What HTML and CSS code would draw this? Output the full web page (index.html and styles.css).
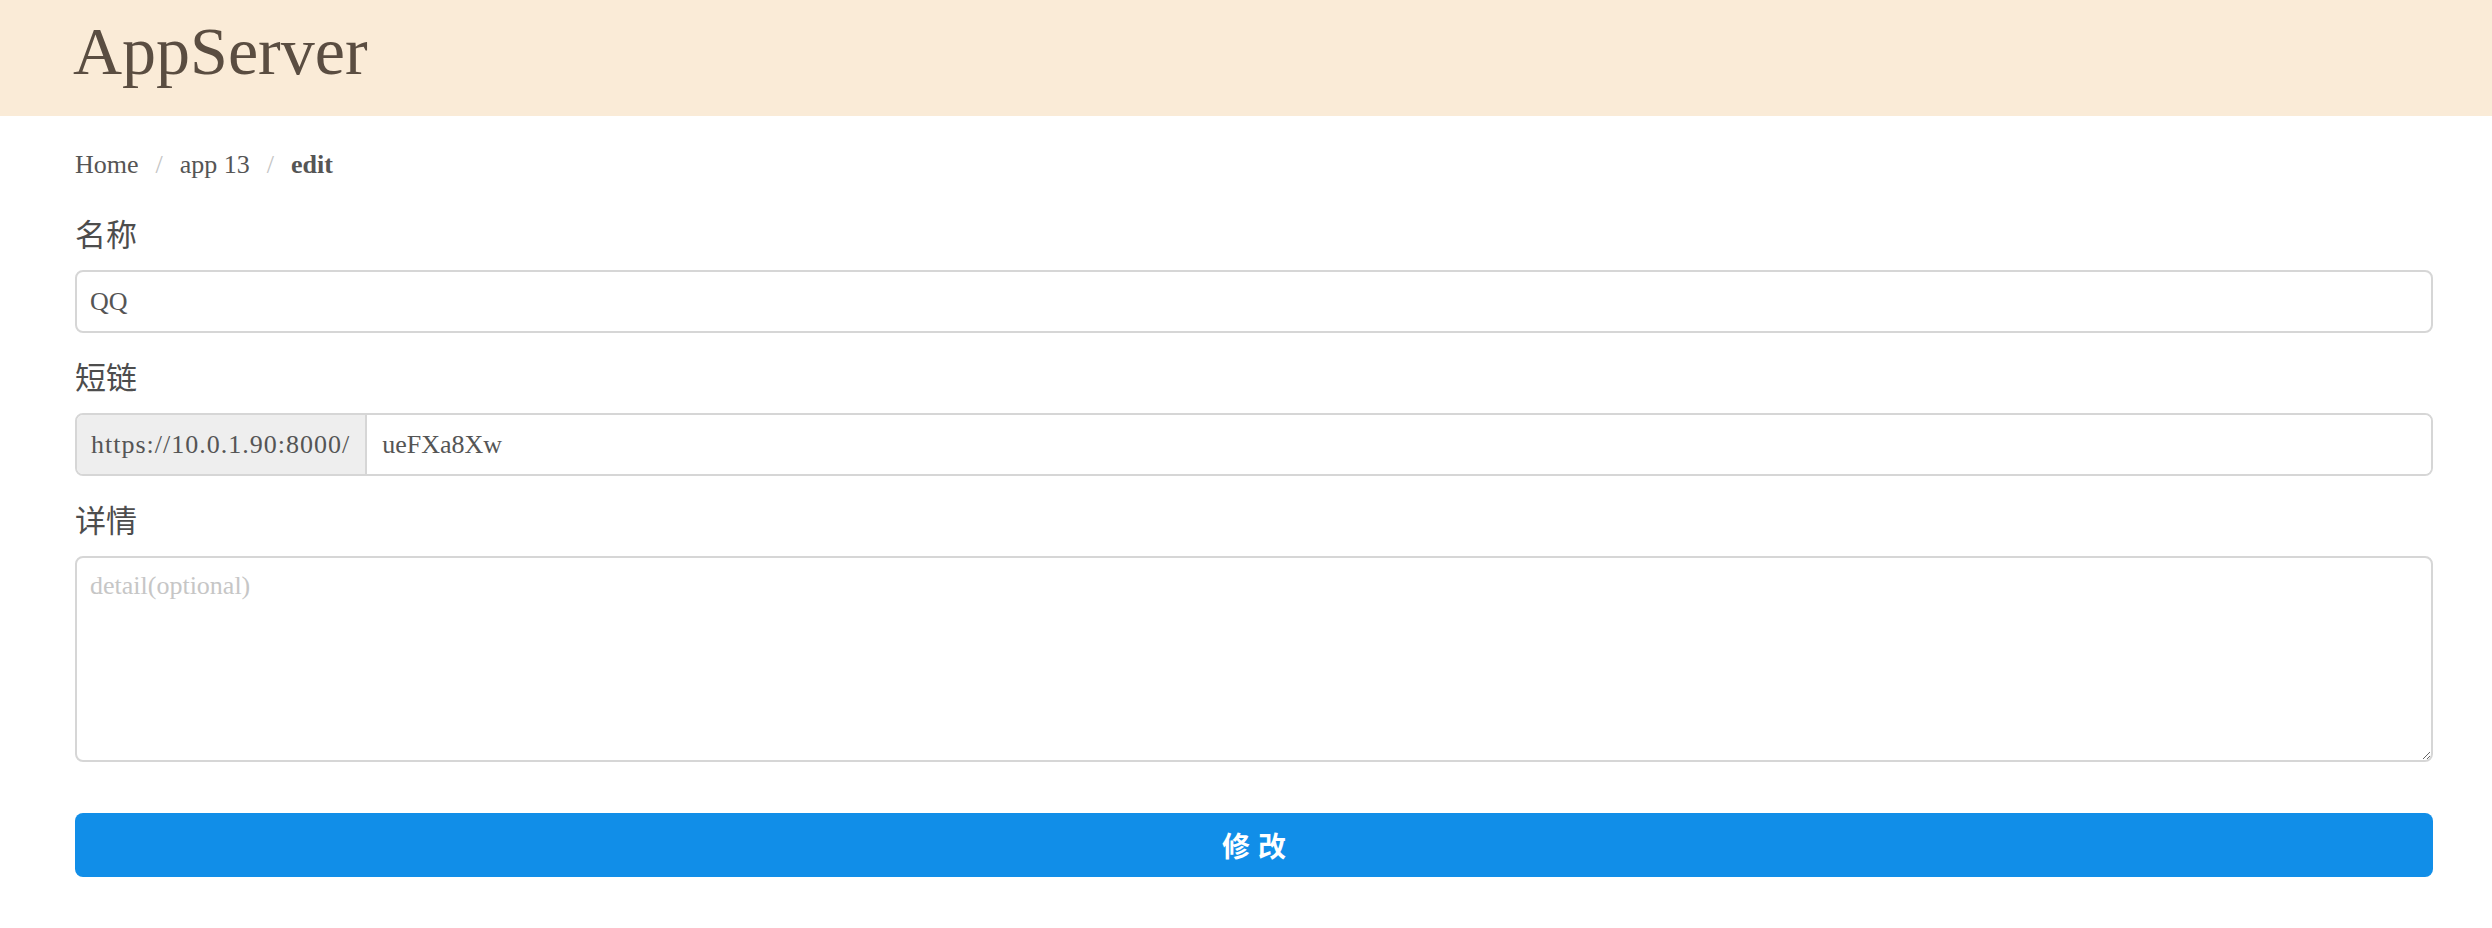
FILE: index.html
```html
<!DOCTYPE html>
<html lang="zh">
<head>
<meta charset="utf-8">
<title>AppServer</title>
<link rel="stylesheet" href="styles.css">
</head>
<body>
<header class="topbar">
  <div class="brand">AppServer</div>
</header>
<main class="container">
  <nav class="breadcrumb">
    <a class="crumb" href="#">Home</a><span class="sep">/</span><a class="crumb" href="#">app 13</a><span class="sep">/</span><span class="crumb current">edit</span>
  </nav>
  <form class="form">
    <div class="group">
      <label class="label">名称</label>
      <input class="input" type="text" value="QQ">
    </div>
    <div class="group">
      <label class="label">短链</label>
      <div class="input-group">
        <span class="addon">https://10.0.1.90:8000/</span>
        <input class="input-inner" type="text" value="ueFXa8Xw">
      </div>
    </div>
    <div class="group">
      <label class="label">详情</label>
      <textarea class="textarea" placeholder="detail(optional)"></textarea>
    </div>
    <button class="submit" type="button">修改</button>
  </form>
</main>
</body>
</html>
```
FILE: styles.css
```css
html, body {
  margin: 0;
  padding: 0;
  background: #ffffff;
}

body {
  font-family: "Liberation Serif", "Noto Sans CJK SC", serif;
  color: #555555;
}

.topbar {
  box-sizing: border-box;
  height: 116px;
  background: #faebd7;
  padding: 17px 0 0 73px;
}

.brand {
  font-family: "Liberation Serif", serif;
  font-size: 68px;
  line-height: 1;
  color: #5a4d41;
}

.container {
  padding: 32px 59px 40px 75px;
}

.breadcrumb {
  display: flex;
  align-items: baseline;
  font-size: 26px;
  line-height: 33px;
}

.crumb {
  color: #555555;
  text-decoration: none;
}

.crumb.current {
  font-weight: bold;
}

.sep {
  color: #c4c4c4;
  padding: 0 17px;
}

.form {
  display: flex;
  flex-direction: column;
  margin-top: 32px;
}

.group {
  display: flex;
  flex-direction: column;
  margin-bottom: 23px;
}

.label {
  font-family: "Noto Sans CJK SC", sans-serif;
  font-size: 31px;
  line-height: 40px;
  color: #4d4d4d;
  margin-bottom: 17px;
}

.input,
.input-group,
.textarea {
  box-sizing: border-box;
  width: 100%;
  border: 2px solid #d6d6d6;
  border-radius: 8px;
  background: #ffffff;
}

.input {
  height: 63px;
  padding: 0 13px;
  font-family: "Liberation Serif", serif;
  font-size: 26px;
  color: #555555;
  outline: none;
}

.input-group {
  display: flex;
  height: 63px;
  overflow: hidden;
}

.addon {
  display: flex;
  align-items: center;
  padding: 0 15px 0 14px;
  background: #eeeeee;
  border-right: 2px solid #d6d6d6;
  font-size: 26px;
  letter-spacing: 1px;
  color: #555555;
}

.input-inner {
  flex: 1;
  border: none;
  padding: 0 15px;
  font-family: "Liberation Serif", serif;
  font-size: 26px;
  color: #555555;
  outline: none;
  background: #ffffff;
}

.textarea {
  display: block;
  height: 206px;
  padding: 12px 13px;
  font-family: "Liberation Serif", serif;
  font-size: 26px;
  line-height: 32px;
  color: #555555;
  outline: none;
  resize: vertical;
}

.textarea::placeholder {
  color: #c6c6c6;
}

.submit {
  box-sizing: border-box;
  width: 100%;
  height: 64px;
  margin-top: 28px;
  border: none;
  border-radius: 8px;
  background: #118ee8;
  color: #ffffff;
  font-family: "Noto Sans CJK SC", sans-serif;
  font-size: 28px;
  font-weight: bold;
  letter-spacing: 8px;
  text-indent: 8px;
}
```
